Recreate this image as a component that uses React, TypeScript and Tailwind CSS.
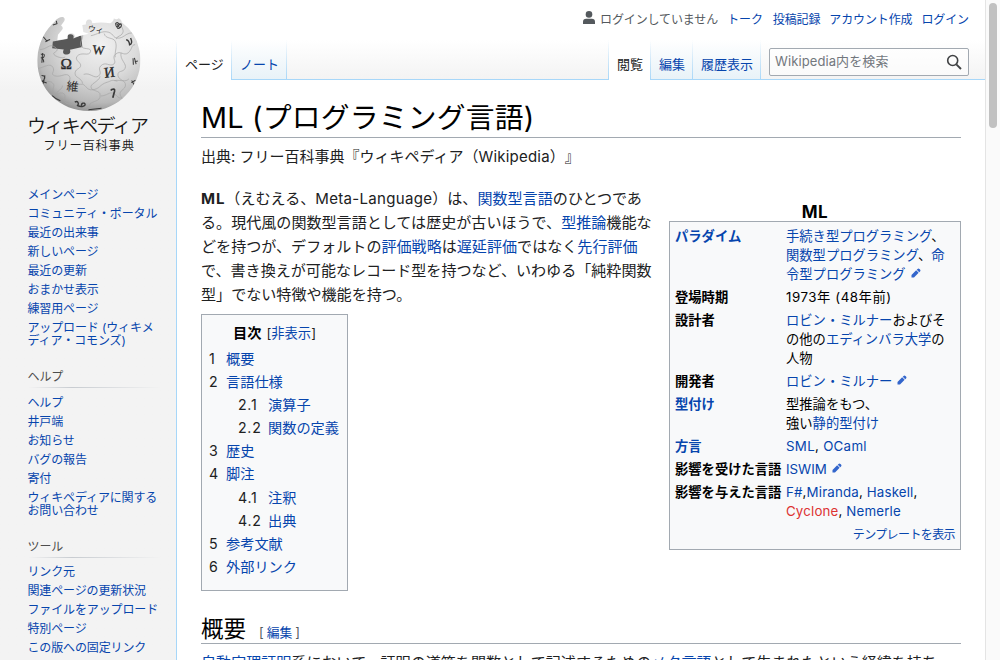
import type { ReactNode } from 'react';

type Child = { children: ReactNode };

const A = ({ children }: Child) => <a className="text-[#0645ad]">{children}</a>;

const Pencil = () => (
  <svg className="ml-[5px] inline-block h-[10px] w-[10px] align-[1px]" viewBox="0 0 20 20" fill="#3366cc">
    <path d="M16.8 1.9 18.1 3.2a2.6 2.6 0 0 1 0 3.7L16.5 8.5 11.5 3.5l1.6-1.6a2.6 2.6 0 0 1 3.7 0ZM10.3 4.7l5 5L6 19H1v-5Z" />
  </svg>
);

function Globe() {
  return (
    <svg className="h-[165px] w-[176px]" viewBox="0 0 528 495">
      <defs>
        <radialGradient id="ball" cx="0.6" cy="0.32" r="0.72">
          <stop offset="0" stopColor="#f2f2f2" />
          <stop offset="0.45" stopColor="#dcdcdc" />
          <stop offset="0.8" stopColor="#b8b8b8" />
          <stop offset="1" stopColor="#858585" />
        </radialGradient>
        <clipPath id="edge">
          <path d="M163 64C172 57 180 52 188 54q6 4 2 12l-9 12q8 5 3 13l-12 14-2 16 31-5q-4-13 9-15 12 1 12 11l40-10-16-5-3-20 10-2q0-14 10-14 9 1 9 11 26-5 52 0 9-3 11-14 9 5 14-1 9 4 9 12 42 32 50 76c23 90-46 178-140 183-90 3-160-66-156-153 2-45 22-84 54-111Z" transform="translate(5 1)" />
        </clipPath>
      </defs>
      <g clipPath="url(#edge)" transform="translate(-8 -5) scale(1.028)">
        <rect x="105" y="45" width="325" height="290" fill="url(#ball)" />
        <path d="m162 126 41-7c-1-10 5-16 12-14 8 1 9 6 7 12l23-9 3 34-36 8c3 8 0 13-8 14-11 1-15-6-10-15l-34-3Z" fill="#585858" />
        <g fill="none" stroke="#a5a5a5" strokeWidth="2">
          <path d="M124 150c21-2 28-17 40-10s15 11 3 18 22 21 31 13M118 205c18-3 36-18 44-4s-10 19 5 25c18 6 34-11 43 1 8 13-9 17-1 24 11 8 34-4 43 1 10 8 10 15 25 15 22-2 22-16 43-22 12-3 12-9 30-3M121 236c20 12 31 2 40 11 11 9-6 20 6 29 11 8 17-6 28 3 8 10-5 18 5 26 20 11 35-6 49-2 15 4 9 14 22 17M248 104c5 16-9 19-4 34 5 14 31 4 28 17-4 17-27-2-40 15-7 12 14 17 11 28-3 9-17 8-16 22 0 13 19 11 22 29M273 109c18-3 33-16 52-10 16 6 12 16 25 17 18 2 24-15 43-15M252 222c19-7 30 14 43 5 13-11-3-18 6-29 15-16 26 3 39-6 9-9-7-19 5-29 15-13 23 7 37-4 14-13 7-22 20-24M300 228c-5 17-31 20-26 34 5 10 25 6 26 20 2 22-26 16-31 29-5 12 7 20 2 25M344 172c-2-17 7-31 0-47-6-12-28-5-32-22M361 159c-4 21 18 32 12 45-5 13-23 5-21 21 2 15 23 13 22 29-1 13-20 14-15 29 3 8 8 11 6 20M342 240c20-3 31 6 42-5" />
          <path d="M190 255c0 14-18 11-16 27M302 285c18 0 25-14 38-7s10 14 24 13M362 72c-4 12 9 17 4 29-4 11-18 8-19 18" />
        </g>
        <g fill="#2a2a2a" fontFamily="'Liberation Serif', 'Noto Sans CJK JP', serif">
          <text x="184" y="205" fontSize="45" stroke="#2a2a2a">Ω</text>
          <text x="278" y="163" fontSize="37" stroke="#2a2a2a" transform="rotate(5 290 150)">W</text>
          <text x="312" y="230" fontSize="43" stroke="#2a2a2a" transform="rotate(-7 330 216)">И</text>
          <text x="264" y="98" fontSize="23" transform="rotate(9 280 90)">ウィ</text>
          <text x="202" y="270" fontSize="35" transform="rotate(5 218 258)">維</text>
        </g>
        <g fill="none" stroke="#3a3a3a" strokeWidth="3">
          <path d="m134 112 10 12 10-4m-6 3-8 4M162 78l12-4-2-8M127 163q12-3 10 5t-10 5q10 5 8 14M132 160l-2 28M129 225q12 1 9 9t-8 8l14 5M139 225l-5 24M160 284q10 10 24 15" />
          <path d="m331 269 3-3q10-4 8 5l-5 19" strokeWidth="5" />
          <path d="M376 121q9 1 10 15 10-3 3-20M226 303c8-5 14 3 8 10 11 5 24 2 22-4s-12-3-10 4" strokeWidth="4" />
          <path d="M345 73q8-5 9 2 9-3 8 5-2 8-10 8-7-5-7-15m4 2 8 11m-8-3 10-8M400 174l5 18m-9-17 1 19m13-11-9 2M392 240l8 13m-9-7 12-7M266 325l38-4" />
        </g>
      </g>
      <g fill="#151515" fontFamily="'Noto Sans CJK JP', sans-serif" fontWeight="350">
        <text x="81" y="400" fontSize="57" textLength="366" lengthAdjust="spacing">ウィキペディア</text>
        <text x="130" y="450" fontSize="37" textLength="272" lengthAdjust="spacing">フリー百科事典</text>
      </g>
    </svg>
  );
}

function NavList({ items }: { items: string[] }) {
  return (
    <ul className="flex flex-col gap-[6px] whitespace-pre text-[12px] leading-[13px] tracking-[-0.13px] text-[#0645ad]">
      {items.map((t) => (
        <li key={t}>{t}</li>
      ))}
    </ul>
  );
}

function NavHeading({ children }: Child) {
  return (
    <div className="mt-[21px]">
      <h3 className="text-[12px] leading-[17px] tracking-[-0.1px] text-[#4d4d4d]">{children}</h3>
      <div className="mt-[2px] h-px w-[133px] bg-linear-to-r from-transparent via-[#c8ccd1] via-33% to-transparent" />
    </div>
  );
}

function Sidebar() {
  return (
    <aside className="flex w-[177px] shrink-0 bg-linear-to-b from-white from-[40px] to-[#f3f3f3] to-[90px]">
      <div className="w-[176px] shrink-0">
        <Globe />
        <nav className="pt-[23px] pl-[27.500px]">
          <NavList
            items={['メインページ', 'コミュニティ・ポータル', '最近の出来事', '新しいページ', '最近の更新', 'おまかせ表示', '練習用ページ', 'アップロード (ウィキメ\nディア・コモンズ)']}
          />
          <NavHeading>ヘルプ</NavHeading>
          <div className="pt-[8px]">
            <NavList items={['ヘルプ', '井戸端', 'お知らせ', 'バグの報告', '寄付', 'ウィキペディアに関する\nお問い合わせ']} />
          </div>
          <NavHeading>ツール</NavHeading>
          <div className="pt-[7px]">
            <NavList items={['リンク元', '関連ページの更新状況', 'ファイルをアップロード', '特別ページ', 'この版への固定リンク']} />
          </div>
        </nav>
      </div>
      <div className="w-px bg-linear-to-b from-transparent from-[40px] to-[#a7d7f9] to-[80px]" />
    </aside>
  );
}

const Rule = () => <div className="h-[40px] w-px bg-linear-to-b from-transparent to-[#a7d7f9]" />;

function Tab({ active, width, children }: Child & { active?: boolean; width: string }) {
  return (
    <div
      className={`${width} h-[40px] pl-[8px] pt-[13px] text-[13px] leading-[22px] whitespace-nowrap ${
        active ? 'bg-white text-[#202122]' : 'border-b border-[#a7d7f9] bg-linear-to-b from-white to-[#e8f2f8] text-[#0645ad]'
      }`}
    >
      {children}
    </div>
  );
}

function Header() {
  return (
    <header className="flex h-[80px] flex-col bg-linear-to-b from-white from-50% to-[#f3f3f3]">
      <div className="flex h-[40px] items-center justify-end pr-[16px] pb-[1px] text-[12px] leading-[16px] tracking-[-0.12px] whitespace-nowrap text-[#0645ad]">
        <svg className="mr-[5px] mb-[4px] h-[13px] w-[12px]" viewBox="0 0 12 13" fill="#54595d">
          <circle cx="6" cy="3.4" r="3.3" />
          <path d="M0 13V11q0-3.2 3.2-3.2h5.6Q12 7.800 12 11v2Z" />
        </svg>
        <span className="mr-[9px] text-[#54595d]">ログインしていません</span>
        <span className="mr-[10px]">トーク</span>
        <span className="mr-[9px]">投稿記録</span>
        <span className="mr-[9px]">アカウント作成</span>
        <span>ログイン</span>
      </div>
      <div className="flex h-[40px]">
        <Tab active width="w-[54px]">ページ</Tab>
        <Rule />
        <Tab width="w-[54px]">ノート</Tab>
        <Rule />
        <div className="flex-1 border-b border-[#a7d7f9]" />
        <Rule />
        <Tab active width="w-[41px]">閲覧</Tab>
        <Rule />
        <Tab width="w-[41px]">編集</Tab>
        <Rule />
        <Tab width="w-[67px]">履歴表示</Tab>
        <Rule />
        <div className="h-[40px] w-[224px] border-b border-[#a7d7f9] pt-[8px] pl-[8px]">
          <div className="flex h-[28px] w-[200px] items-center justify-between rounded-[2px] border border-[#a2a9b1] bg-white/50 pr-[6px] pl-[5px] text-[13px] leading-[20px] text-[#72777d]">
            <span className="mb-[2px] tracking-[0.1px]">Wikipedia内を検索</span>
            <svg className="h-[16px] w-[16px]" viewBox="0 0 16 16" fill="none" stroke="#404244" strokeWidth="1.6">
              <circle cx="6.700" cy="6.500" r="5" />
              <path d="m10.300 10.300 4.700 4.700" strokeWidth="1.9" />
            </svg>
          </div>
        </div>
      </div>
    </header>
  );
}

const toc: [string, string, boolean?][] = [
  ['1', '概要'],
  ['2', '言語仕様'],
  ['2.1', '演算子', true],
  ['2.2', '関数の定義', true],
  ['3', '歴史'],
  ['4', '脚注'],
  ['4.1', '注釈', true],
  ['4.2', '出典', true],
  ['5', '参考文献'],
  ['6', '外部リンク'],
];

function Toc() {
  return (
    <div className="mt-[7px] h-[277px] w-[147px] border border-[#a2a9b1] bg-[#f8f9fa] pt-[8px] pl-[7px] text-[14.2px] whitespace-nowrap">
      <div className="mb-[4px] pl-[24px] leading-[20px]">
        <b className="text-black">目次</b>
        <span className="ml-[5px] text-[13.3px]">
          [<A>非表示</A>]
        </span>
      </div>
      {toc.map(([n, t, sub]) => (
        <div key={n} className={`flex leading-[23.1px] ${sub ? 'pl-[29px]' : ''}`}>
          <span className={sub ? 'w-[30px] tracking-[0.7px]' : 'w-[17px]'}>{n}</span>
          <A>{t}</A>
        </div>
      ))}
    </div>
  );
}

function Row({ label, link, children }: Child & { label: string; link?: boolean }) {
  return (
    <div className="flex leading-[19px]">
      <div className={`w-[111px] shrink-0 font-bold ${link ? 'text-[#0645ad]' : 'text-black'}`}>{label}</div>
      <div>{children}</div>
    </div>
  );
}

function Infobox() {
  return (
    <div className="w-[292px] pt-[16px] text-[13.3px] whitespace-nowrap text-black">
      <div className="h-[18px] text-center text-[17px] leading-[19px] font-bold tracking-[0.5px]">ML</div>
      <div className="flex h-[329px] flex-col gap-[4px] border border-[#a2a9b1] bg-[#f8f9fa] pt-[5px] pl-[5px]">
        <Row label="パラダイム" link>
          <A>手続き型プログラミング</A>、<br />
          <A>関数型プログラミング</A>、<A>命</A><br />
          <A>令型プログラミング</A><Pencil />
        </Row>
        <Row label="登場時期"><span className="tracking-[0.55px]">1973年 (48年前)</span></Row>
        <Row label="設計者">
          <A>ロビン・ミルナー</A>およびそ<br />の他の<A>エディンバラ大学</A>の<br />人物
        </Row>
        <Row label="開発者"><A>ロビン・ミルナー</A><Pencil /></Row>
        <Row label="型付け" link>型推論をもつ、<br />強い<A>静的型付け</A></Row>
        <Row label="方言" link><span className="tracking-[0.3px]"><A>SML</A>, <A>OCaml</A></span></Row>
        <Row label="影響を受けた言語"><A>ISWIM</A><Pencil /></Row>
        <Row label="影響を与えた言語">
          <span className="tracking-[0.16px]">
            <A>F#</A>,<A>Miranda</A>, <A>Haskell</A>,<br />
            <span className="text-[#d33]">Cyclone</span>, <A>Nemerle</A>
          </span>
        </Row>
        <div className="pr-[5px] text-right text-[12px] leading-[20px] tracking-[-0.6px]">
          <A>テンプレートを表示</A>
        </div>
      </div>
    </div>
  );
}

export default function App() {
  return (
    <div className="flex h-[660px] w-[1000px] overflow-hidden bg-white font-['Inter','Noto_Sans_CJK_JP',sans-serif] text-[#202122] [text-spacing-trim:space-all]">
      <Sidebar />
      <div className="w-[808px] shrink-0">
        <Header />
        <main className="pt-[19px] pr-[24px] pl-[24px]">
          <h1 className="h-[39px] border-b border-[#a2a9b1] text-[28.8px] leading-[38px] tracking-[0.2px] whitespace-nowrap text-black">ML (プログラミング言語)</h1>
          <p className="mt-[8px] text-[15px] leading-[22px] whitespace-nowrap">出典: フリー百科事典『ウィキペディア（<span className="tracking-[0.2px]">Wikipedia</span>）』</p>
          <div className="mt-[19px] flex justify-between">
            <div>
              <p className="text-[15.07px] leading-[24px] whitespace-nowrap">
                <b className="tracking-[0.9px]">ML</b>（えむえる、<span className="tracking-[0.28px]">Meta-Language</span>）は、<A>関数型言語</A>のひとつであ<br />
                る。現代風の関数型言語としては歴史が古いほうで、<A>型推論</A>機能な<br />
                どを持つが、デフォルトの<A>評価戦略</A>は<A>遅延評価</A>ではなく<A>先行評価</A><br />
                で、書き換えが可能なレコード型を持つなど、いわゆる「純粋関数<br />
                型」でない特徴や機能を持つ。
              </p>
              <Toc />
            </div>
            <Infobox />
          </div>
          <h2 className="mt-[23px] flex h-[30px] items-baseline border-b border-[#a2a9b1] text-[22.500px] leading-[30px] text-black">
            概要
            <span className="ml-[13px] flex gap-[3px] text-[12.800px] text-[#54595d]">[<A>編集</A>]</span>
          </h2>
          <p className="mt-[7px] text-[15.07px] leading-[24px] whitespace-nowrap">
            <A>自動定理証明</A>系において、証明の道筋を関数として記述するための<A>メタ言語</A>として生まれたという経緯を持ち、
          </p>
        </main>
      </div>
      <div className="w-[15px] shrink-0 border-l border-[#e4e4e4] bg-[#fafafa] pt-[3px] pl-[3px]">
        <div className="h-[125px] w-[8px] rounded-full bg-[#c1c1c1]" />
      </div>
    </div>
  );
}
